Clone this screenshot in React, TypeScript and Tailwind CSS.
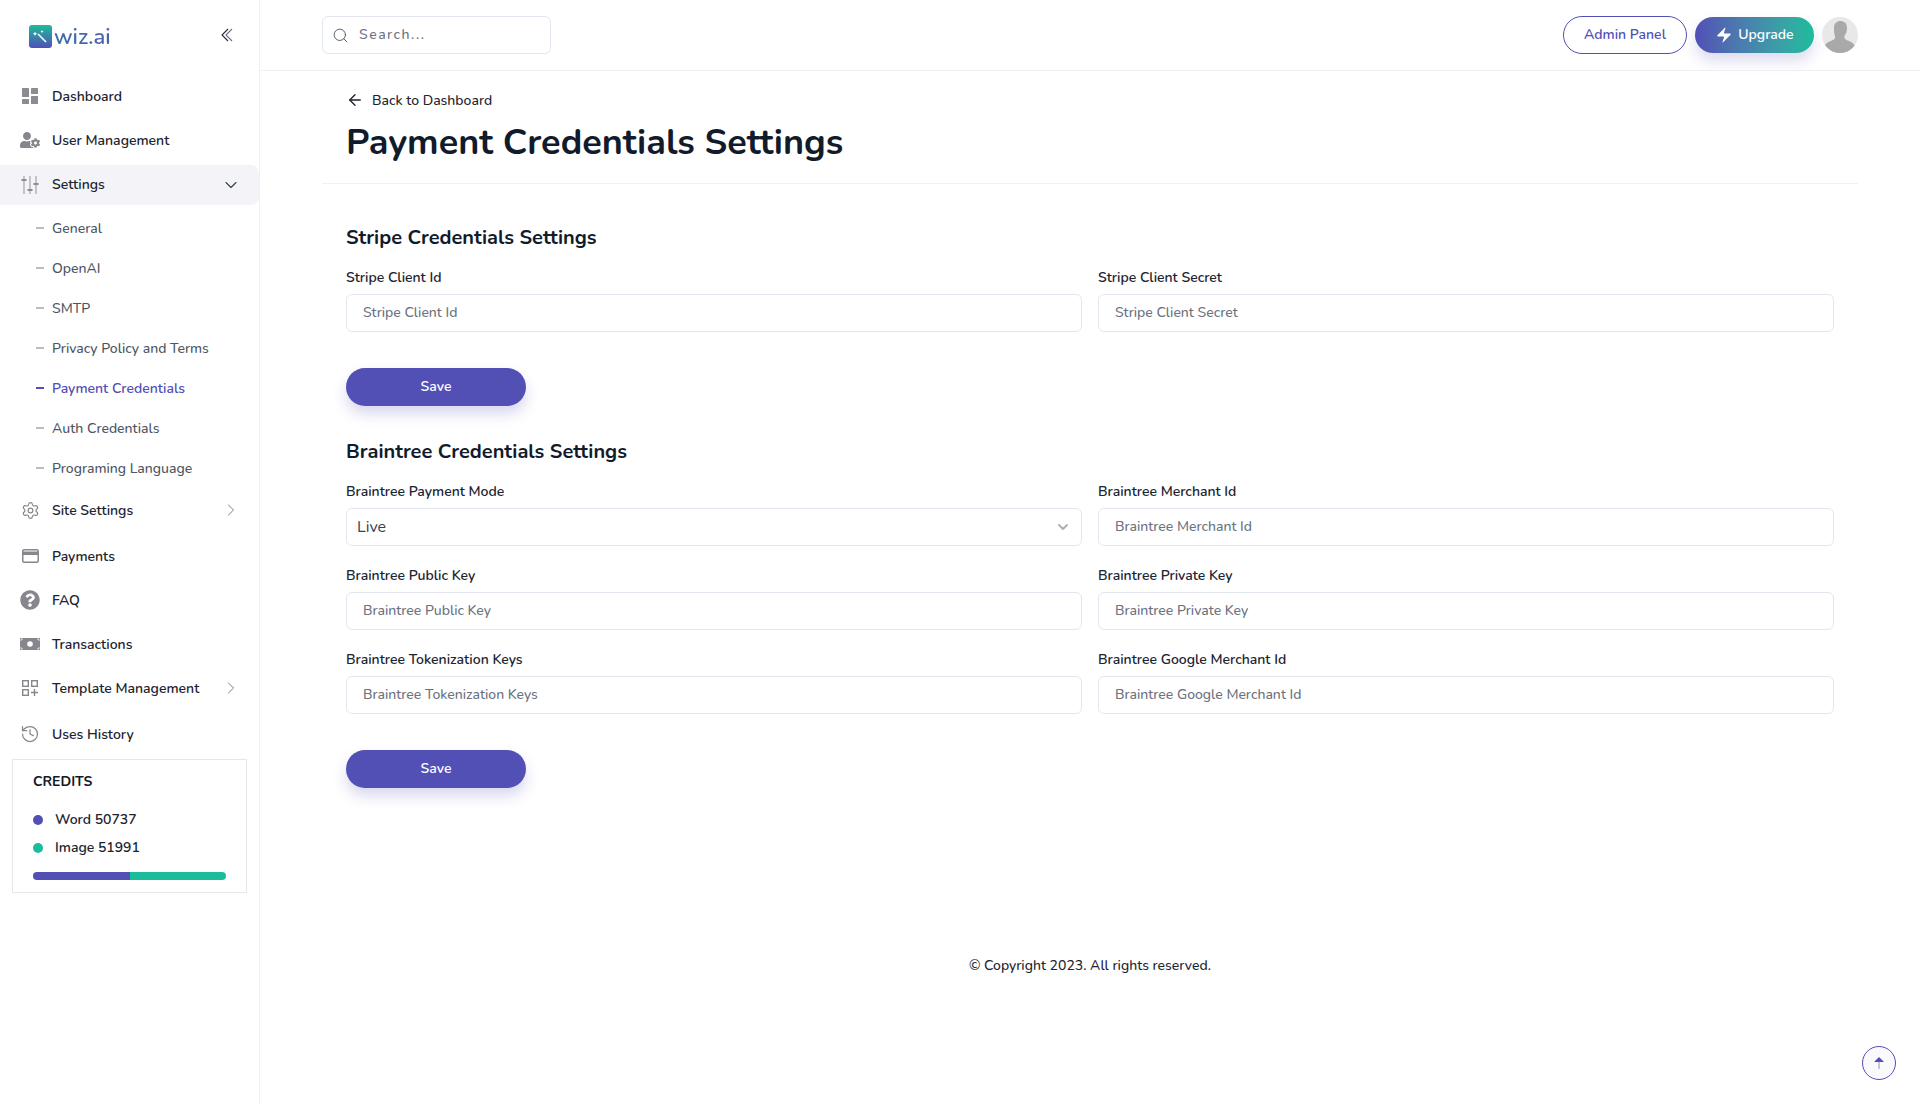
import { ArrowLeft, ChevronDown, ChevronRight, History, Search, Settings, Zap } from 'lucide-react';
import { FaQuestionCircle, FaUserCog } from 'react-icons/fa';

const subItems = ['General', 'OpenAI', 'SMTP', 'Privacy Policy and Terms', 'Payment Credentials', 'Auth Credentials', 'Programing Language'];

const DashboardIcon = () => (
  <svg width="16" height="16" viewBox="0 0 16 16" fill="#8a8c91">
    <rect x="0" y="0" width="7" height="9" rx="0.5" />
    <rect x="9" y="0" width="7" height="6" rx="0.5" />
    <rect x="0" y="11" width="7" height="5" rx="0.5" />
    <rect x="9" y="8" width="7" height="8" rx="0.5" />
  </svg>
);

const SlidersIcon = () => (
  <svg width="18" height="20" viewBox="0 0 18 20" fill="none" stroke="#a3a5a9" strokeWidth="1.2">
    <path d="M3 1v18M9 1v18M15 1v18" />
    <path d="M0.5 5h5M6.5 15h5M12.5 9h5" strokeWidth="1.8" stroke="#8a8c91" />
  </svg>
);

const CardIcon = () => (
  <svg width="17" height="14" viewBox="0 0 17 14" fill="none">
    <rect x="0.75" y="0.75" width="15.5" height="12.500" rx="1.5" stroke="#85878c" strokeWidth="1.500" />
    <rect x="1" y="2.500" width="15" height="3.500" fill="#85878c" />
  </svg>
);

const MoneyIcon = () => (
  <svg width="20" height="12" viewBox="0 0 20 12">
    <rect width="20" height="12" fill="#85878c" />
    <circle cx="10" cy="6" r="2.8" fill="#fff" />
    <path d="M1 3V1h2M19 3V1h-2M1 9v2h2M19 9v2h-2" fill="none" stroke="#fff" strokeWidth="0.7" />
  </svg>
);

const TemplateIcon = () => (
  <svg width="16" height="16" viewBox="0 0 16 16" fill="none" stroke="#85878c" strokeWidth="1.4">
    <rect x="0.7" y="0.7" width="5.6" height="5.6" />
    <rect x="9.7" y="0.7" width="5.6" height="5.6" />
    <rect x="0.7" y="9.7" width="5.6" height="5.6" />
    <path d="M12.5 9v7M9 12.5h7" />
  </svg>
);

const Logo = () => (
  <div className="flex items-center">
    <svg width="23" height="23" viewBox="0 0 23 23">
      <defs>
        <linearGradient id="logoGrad" x1="0" y1="0" x2="0" y2="1">
          <stop offset="0" stopColor="#1cbc9b" />
          <stop offset="1" stopColor="#524fb5" />
        </linearGradient>
      </defs>
      <rect width="23" height="23" rx="3" fill="url(#logoGrad)" />
      <path d="M9 9l8 8" stroke="#fff" strokeWidth="1.6" />
      <path d="M6 6.5l.7 1.5 1.5.7-1.5.7L6 11l-.7-1.6-1.5-.7 1.5-.7zM13 5l.5 1.1 1.1.5-1.1.5-.5 1.1-.5-1.1-1.1-.5 1.1-.5z" fill="#fff" />
    </svg>
    <span className="ml-[2px] text-[22px] leading-none font-semibold bg-gradient-to-r from-[#3c6fa8] to-[#4a62ad] bg-clip-text text-transparent">wiz.ai</span>
  </div>
);

const NavItem = ({ icon, label, arrow, active, className = '' }: { icon: React.ReactNode; label: string; arrow?: 'right' | 'down'; active?: boolean; className?: string }) => (
  <div className={`flex h-10 items-center rounded-r-lg pl-5 pr-[18px] text-[14px] font-semibold text-[#1b2430] ${active ? 'bg-[#f4f4f8] pb-[1px]' : ''} ${className}`}>
    <span className="flex w-[20px] justify-center">{icon}</span>
    <span className="ml-[12px] flex-1">{label}</span>
    {arrow === 'right' && <ChevronRight size={20} strokeWidth={1.1} className="text-[#6b7280]" />}
    {arrow === 'down' && <ChevronDown size={20} strokeWidth={1.3} className="text-[#374151]" />}
  </div>
);

const Field = ({ label, placeholder }: { label: string; placeholder: string }) => (
  <div>
    <label className="mb-[6px] block h-[20px] text-[14px] leading-5 font-semibold text-[#1b2430]">{label}</label>
    <input
      placeholder={placeholder}
      className="h-[38px] w-full rounded-[6px] border border-[#e2e6ef] px-4 pb-[2px] text-[14px] font-medium outline-none placeholder:text-[#6b7280]"
    />
  </div>
);

const SaveButton = () => (
  <button className="h-[38px] w-[180px] rounded-full bg-[#524fb5] pb-[2px] text-[14px] font-semibold text-white shadow-[0_8px_14px_rgba(82,79,181,0.22)]">Save</button>
);

export default function App() {
  return (
    <div className="flex h-screen overflow-hidden bg-white font-['Nunito','Lato','Noto_Sans',sans-serif]">
      {/* Sidebar */}
      <aside className="w-[260px] shrink-0 border-r border-[#f0f0f5]">
        <div className="flex h-[76px] items-start justify-between pl-[29px] pr-[26px] pt-[25px]">
          <Logo />
          <svg width="12" height="14" viewBox="0 0 12 14" fill="none" className="mt-[3px]">
            <path d="M7 1L1 7l6 6" stroke="#1f2937" strokeWidth="1.1" />
            <path d="M11 1L5 7l6 6" stroke="#6b7280" strokeWidth="1.1" />
          </svg>
        </div>
        <nav className="flex flex-col">
          <NavItem icon={<DashboardIcon />} label="Dashboard" />
          <NavItem icon={<FaUserCog size={20} color="#85878c" />} label="User Management" className="mt-1" />
          <NavItem icon={<SlidersIcon />} label="Settings" arrow="down" active className="mt-[5px]" />
          <div className="mt-[3px]">
            {subItems.map((s) => (
              <div key={s} className={`flex h-10 items-center pl-9 text-[14px] font-medium ${s === 'Payment Credentials' ? 'font-semibold text-[#524fb5]' : 'text-[#4b5563]'}`}>
                <span className={`mr-[8px] h-[1.5px] w-[8px] ${s === 'Payment Credentials' ? 'bg-[#524fb5]' : 'bg-[#b8bcc4]'}`} />
                {s}
              </div>
            ))}
          </div>
          <NavItem icon={<Settings size={19} strokeWidth={1.5} color="#85878c" />} label="Site Settings" arrow="right" className="mt-[2px]" />
          <NavItem icon={<CardIcon />} label="Payments" className="mt-[6px]" />
          <NavItem icon={<FaQuestionCircle size={20} color="#85878c" />} label="FAQ" className="mt-1" />
          <NavItem icon={<MoneyIcon />} label="Transactions" className="mt-1" />
          <NavItem icon={<TemplateIcon />} label="Template Management" arrow="right" className="mt-1" />
          <NavItem icon={<History size={20} strokeWidth={1.5} color="#85878c" />} label="Uses History" className="mt-[6px]" />
        </nav>
        <div className="ml-3 mt-[5px] h-[134px] w-[235px] border border-[#e5e7eb] px-5 pt-[12px]">
          <div className="text-[14px] leading-5 font-bold text-[#111827]">CREDITS</div>
          <div className="mt-[18px] flex items-center text-[14px] leading-5 font-semibold text-[#1b2430]">
            <span className="mr-3 h-[10px] w-[10px] rounded-full bg-[#524fb5]" />Word 50737
          </div>
          <div className="mt-2 flex items-center text-[14px] leading-5 font-semibold text-[#1b2430]">
            <span className="mr-3 h-[10px] w-[10px] rounded-full bg-[#1abc9c]" />Image 51991
          </div>
          <div className="mt-[14px] flex h-2 w-[193px] overflow-hidden rounded-full">
            <div className="w-1/2 bg-[#524fb5]" />
            <div className="w-1/2 bg-[#1abc9c]" />
          </div>
        </div>
      </aside>

      {/* Main */}
      <div className="relative min-w-0 flex-1">
        <header className="flex h-[71px] items-center justify-between border-b border-[#f0f0f5] pl-[62px] pr-[62px]">
          <div className="flex h-[38px] w-[229px] items-center rounded-[6px] border border-[#e2e6ef] pl-[9px]">
            <Search size={17} strokeWidth={1.3} className="text-[#4b5563]" />
            <span className="ml-[10px] pb-[2px] text-[14px] font-medium tracking-[1.5px] text-[#6b7280]">Search...</span>
          </div>
          <div className="flex items-center">
            <button className="h-[38px] w-[124px] rounded-full border border-[#524fb5] pb-[2px] text-[14px] font-semibold text-[#524fb5]">Admin Panel</button>
            <button className="ml-2 flex h-9 w-[119px] items-center justify-center rounded-full bg-gradient-to-r from-[#524fb5] to-[#1abc9c] pb-[1px] text-[14px] font-semibold text-white shadow-[0_8px_14px_rgba(82,79,181,0.2)]">
              <Zap size={18} fill="#fff" strokeWidth={0} className="mr-[5px]" />Upgrade
            </button>
            <svg width="36" height="36" viewBox="0 0 36 36" className="ml-2">
              <clipPath id="avatarClip"><circle cx="18" cy="18" r="18" /></clipPath>
              <g clipPath="url(#avatarClip)">
                <rect width="36" height="36" fill="#e8e8e8" />
                <path d="M12 11c0-5 3-7 6.500-7S25 6 25 11c0 3-1 6-2.500 8-.5 2 0 3 3 4.500 4 1.500 7 3 8 7V36H2v-5.500c1-4 4-5.500 8-7 3-1.500 3.500-2.500 3-4.500-1-2-1-5-1-8z" fill="#a9a9a9" />
              </g>
            </svg>
          </div>
        </header>

        <div className="pl-[62px] pr-[62px]">
          <div className="h-[113px] border-b border-[#f0f0f5] pl-[24px] pt-[19px]">
            <div className="flex h-5 items-center text-[14px] font-medium text-[#1b2430]">
              <ArrowLeft size={18} strokeWidth={1.8} className="mr-[8px]" />Back to Dashboard
            </div>
            <h1 className="mt-2 text-[36px] leading-[50px] font-bold text-[#111b2b]">Payment Credentials Settings</h1>
          </div>

          <div className="px-6">
            <h3 className="mt-[39px] text-[20px] leading-[30px] font-bold text-[#111b2b]">Stripe Credentials Settings</h3>
            <div className="mt-[15px] grid grid-cols-2 gap-x-4">
              <Field label="Stripe Client Id" placeholder="Stripe Client Id" />
              <Field label="Stripe Client Secret" placeholder="Stripe Client Secret" />
            </div>
            <div className="mt-9"><SaveButton /></div>

            <h3 className="mt-[31px] text-[20px] leading-[30px] font-bold text-[#111b2b]">Braintree Credentials Settings</h3>
            <div className="mt-[15px] grid grid-cols-2 gap-x-4 gap-y-[20px]">
              <div>
                <label className="mb-[6px] block h-[20px] text-[14px] leading-5 font-semibold text-[#1b2430]">Braintree Payment Mode</label>
                <div className="flex h-[38px] items-center justify-between rounded-[6px] border border-[#e2e6ef] pl-[10px] pr-[10px] text-[16px] text-[#374151]">
                  Live
                  <ChevronDown size={16} strokeWidth={3} className="text-[#b0b0b0]" />
                </div>
              </div>
              <Field label="Braintree Merchant Id" placeholder="Braintree Merchant Id" />
              <Field label="Braintree Public Key" placeholder="Braintree Public Key" />
              <Field label="Braintree Private Key" placeholder="Braintree Private Key" />
              <Field label="Braintree Tokenization Keys" placeholder="Braintree Tokenization Keys" />
              <Field label="Braintree Google Merchant Id" placeholder="Braintree Google Merchant Id" />
            </div>
            <div className="mt-9"><SaveButton /></div>
          </div>

          <footer className="mt-[168px] text-center text-[14px] leading-5 font-medium text-[#1b2430]">© Copyright 2023. All rights reserved.</footer>
        </div>

        <button className="absolute bottom-[24px] right-[24px] flex h-[34px] w-[34px] items-center justify-center rounded-full border border-[#524fb5] bg-[#fafafc]">
          <svg width="10" height="12" viewBox="0 0 10 12">
            <path d="M5 0L10 5H0z" fill="#524fb5" />
            <rect x="4" y="5" width="2" height="7" fill="#c5c4e8" />
          </svg>
        </button>
      </div>
    </div>
  );
}
